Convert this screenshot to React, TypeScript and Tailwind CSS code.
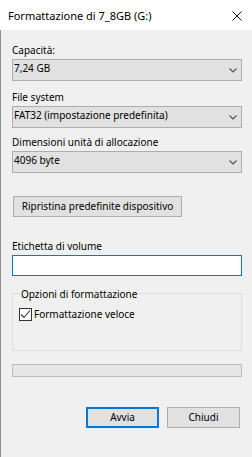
import React from "react";

const Combo = ({ value }: { value: string }) => (
  <div className="relative h-[22px] w-[230px] border border-[#adadad] bg-[#e1e1e1] pl-[1px] text-[10px] leading-[17px] text-black whitespace-nowrap">
    {value}
    <svg width="8" height="5" viewBox="0 0 8 5" className="absolute right-[4px] top-[8px]">
      <path d="M0.5 0.5 L4 4 L7.5 0.5" fill="none" stroke="#505050" strokeWidth="1.1" />
    </svg>
  </div>
);

const Label = ({ text, mt }: { text: string; mt: string }) => (
  <div className={`${mt} h-[13px] text-[10px] leading-[13px]`}>{text}</div>
);

export default function App() {
  return (
    <div className="w-[252px] h-[457px] bg-[#f0f0f0] overflow-hidden text-black whitespace-nowrap font-['Noto_Sans',sans-serif]">
      <div className="h-[30px] bg-white flex items-center justify-between pl-[8px] pr-[10px]">
        <span className="text-[11px] leading-[15px]">Formattazione di 7_8GB (G:)</span>
        <svg width="10" height="10" viewBox="0 0 10 10" className="mt-[2px]">
          <path d="M0.5 0.5 L9.5 9.5 M9.5 0.5 L0.5 9.5" stroke="#111" strokeWidth="1" fill="none" />
        </svg>
      </div>
      <div className="h-[427px] border-l border-[#8f8f8f] pl-[11px] flex flex-col items-start">
        <Label mt="mt-[14px]" text="Capacità:" />
        <div className="mt-[2px]">
          <Combo value="7,24 GB" />
        </div>
        <Label mt="mt-[10px]" text="File system" />
        <div className="mt-[2px]">
          <Combo value="FAT32 (impostazione predefinita)" />
        </div>
        <Label mt="mt-[8px]" text="Dimensioni unità di allocazione" />
        <div className="mt-[2px]">
          <Combo value="4096 byte" />
        </div>
        <div className="mt-[23px] ml-[1px] h-[21px] w-[169px] border border-[#adadad] bg-[#e1e1e1] text-center text-[10px] leading-[19px]">
          Ripristina predefinite dispositivo
        </div>
        <Label mt="mt-[23px]" text="Etichetta di volume" />
        <div className="mt-[2px] h-[21px] w-[230px] border border-[#0078d7] bg-white" />
        <div className="relative mt-[17px] h-[58px] w-[230px] border border-[#dcdcdc]">
          <div className="absolute left-[7px] top-[-6px] bg-[#f0f0f0] px-[1px] text-[10px] leading-[13px]">
            Opzioni di formattazione
          </div>
          <div className="mt-[14px] ml-[6px] flex items-center">
            <div className="w-[13px] h-[13px] border border-[#333333] bg-white flex items-center justify-center">
              <svg width="11" height="11" viewBox="0 0 11 11">
                <path d="M1 5.5 L4 8.5 L10 1.5" fill="none" stroke="#333333" strokeWidth="1.1" />
              </svg>
            </div>
            <span className="ml-[2px] text-[10px] leading-[13px]">Formattazione veloce</span>
          </div>
        </div>
        <div className="mt-[13px] h-[13px] w-[230px] border border-[#bcbcbc] bg-[#e6e6e6]" />
        <div className="mt-[30px] w-[228px] flex justify-end gap-[8px]">
          <div className="h-[21px] w-[73px] border-2 border-[#0078d7] bg-[#e1e1e1] text-center text-[10px] leading-[17px]">
            Avvia
          </div>
          <div className="h-[21px] w-[73px] border border-[#adadad] bg-[#e1e1e1] text-center text-[10px] leading-[19px]">
            Chiudi
          </div>
        </div>
      </div>
    </div>
  );
}
